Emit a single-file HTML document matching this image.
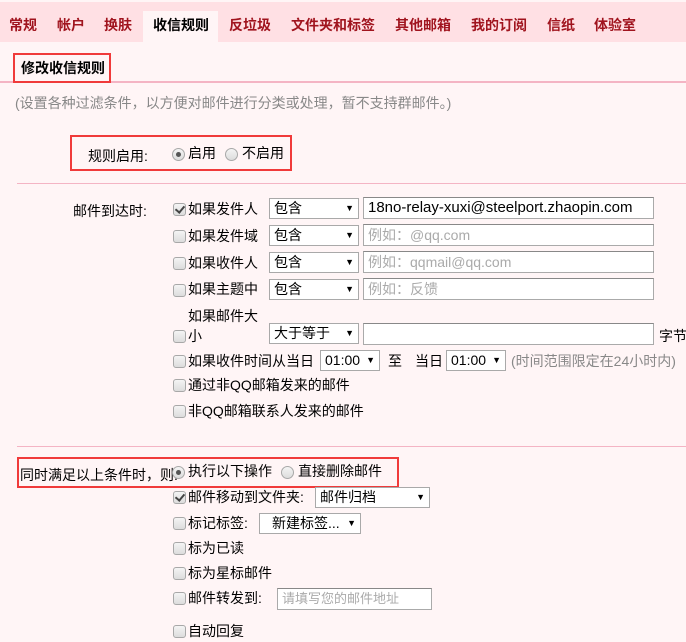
<!DOCTYPE html>
<html><head><meta charset="utf-8"><style>
*{margin:0;padding:0;box-sizing:border-box}
body{width:686px;height:642px;background:#fff5f6;position:relative;overflow:hidden;font-family:"Liberation Sans","Noto Sans CJK SC",sans-serif;font-size:14px;color:#000}
.a{position:absolute;white-space:nowrap;line-height:20px}
.tabbar{position:absolute;left:0;top:2px;width:686px;height:40px;background:#ffe0e4}
.tab{position:absolute;top:15px;color:#a0141e;font-size:14px;line-height:20px;font-weight:bold}
.cb{position:absolute;width:13px;height:13px;border:1px solid #a8a8a8;border-radius:3px;background:linear-gradient(#f4f4f4,#dcdcdc)}
.cb.on::after{content:"";position:absolute;left:3px;top:0px;width:4px;height:7px;border:solid #444;border-width:0 2px 2px 0;transform:rotate(40deg)}
.rd{position:absolute;width:13px;height:13px;border:1px solid #a8a8a8;border-radius:50%;background:linear-gradient(#f4f4f4,#dcdcdc)}
.rd.on::after{content:"";position:absolute;left:3px;top:3px;width:5px;height:5px;border-radius:50%;background:#555}
.sel{position:absolute;height:21px;border:1px solid #a9a9a9;background:#fff;line-height:19px;padding-left:4px;font-size:14px}
.sel::after{content:"▼";position:absolute;right:4px;top:0;font-size:9px}
.inp{position:absolute;height:22px;border:1px solid #aaa;border-top-color:#888;background:#fff;line-height:20px;padding-left:4px;font-size:14px;color:#aaa}
.red{position:absolute;border:2px solid #f03a3a}
.hl{position:absolute;height:1px;background:#f4b4c4}
</style></head><body>
<div class="tabbar"></div>
<div style="position:absolute;left:143px;top:11px;width:75px;height:31px;background:#fff5f6"></div>
<div class="tab" style="left:9px">常规</div>
<div class="tab" style="left:57px">帐户</div>
<div class="tab" style="left:104px">换肤</div>
<div class="tab" style="left:153px;color:#000">收信规则</div>
<div class="tab" style="left:229px">反垃圾</div>
<div class="tab" style="left:291px">文件夹和标签</div>
<div class="tab" style="left:395px">其他邮箱</div>
<div class="tab" style="left:471px">我的订阅</div>
<div class="tab" style="left:547px">信纸</div>
<div class="tab" style="left:594px">体验室</div>

<div class="hl" style="left:0;top:81px;width:686px;height:2px"></div>
<div class="a" style="left:21px;top:58px;font-weight:bold">修改收信规则</div>
<div class="red" style="left:13px;top:53px;width:98px;height:30px"></div>

<div class="a" style="left:15px;top:93px;color:#888;font-size:14px">(设置各种过滤条件，以方便对邮件进行分类或处理，暂不支持群邮件。)</div>

<div class="red" style="left:70px;top:135px;width:222px;height:36px"></div>
<div class="a" style="left:88px;top:146px">规则启用:</div>
<div class="rd on" style="left:172px;top:148px"></div>
<div class="a" style="left:188px;top:143px">启用</div>
<div class="rd" style="left:225px;top:148px"></div>
<div class="a" style="left:242px;top:143px">不启用</div>

<div class="hl" style="left:17px;top:183px;width:669px"></div>

<div class="a" style="left:73px;top:201px">邮件到达时:</div>

<div class="cb on" style="left:173px;top:203px"></div>
<div class="a" style="left:188px;top:199px">如果发件人</div>
<div class="sel" style="left:269px;top:198px;width:90px">包含</div>
<div class="inp" style="left:363px;top:197px;width:291px;color:#000;font-size:15px">18no-relay-xuxi@steelport.zhaopin.com</div>

<div class="cb" style="left:173px;top:230px"></div>
<div class="a" style="left:188px;top:226px">如果发件域</div>
<div class="sel" style="left:269px;top:225px;width:90px">包含</div>
<div class="inp" style="left:363px;top:224px;width:291px">例如：@qq.com</div>

<div class="cb" style="left:173px;top:257px"></div>
<div class="a" style="left:188px;top:253px">如果收件人</div>
<div class="sel" style="left:269px;top:252px;width:90px">包含</div>
<div class="inp" style="left:363px;top:251px;width:291px">例如：qqmail@qq.com</div>

<div class="cb" style="left:173px;top:284px"></div>
<div class="a" style="left:188px;top:279px">如果主题中</div>
<div class="sel" style="left:269px;top:279px;width:90px">包含</div>
<div class="inp" style="left:363px;top:278px;width:291px">例如：反馈</div>

<div class="a" style="left:188px;top:306px">如果邮件大</div>
<div class="cb" style="left:173px;top:330px"></div>
<div class="a" style="left:188px;top:326px">小</div>
<div class="sel" style="left:269px;top:323px;width:90px">大于等于</div>
<div class="inp" style="left:363px;top:323px;width:291px"></div>
<div class="a" style="left:659px;top:326px">字节</div>

<div class="cb" style="left:173px;top:355px"></div>
<div class="a" style="left:188px;top:351px">如果收件时间从当日</div>
<div class="sel" style="left:320px;top:350px;width:60px">01:00</div>
<div class="a" style="left:388px;top:351px">至</div>
<div class="a" style="left:415px;top:351px">当日</div>
<div class="sel" style="left:446px;top:350px;width:60px">01:00</div>
<div class="a" style="left:511px;top:351px;color:#888">(时间范围限定在24小时内)</div>

<div class="cb" style="left:173px;top:379px"></div>
<div class="a" style="left:188px;top:375px">通过非QQ邮箱发来的邮件</div>
<div class="cb" style="left:173px;top:405px"></div>
<div class="a" style="left:188px;top:401px">非QQ邮箱联系人发来的邮件</div>

<div class="hl" style="left:17px;top:446px;width:669px"></div>

<div class="red" style="left:17px;top:457px;width:382px;height:31px"></div>
<div class="a" style="left:20px;top:465px">同时满足以上条件时，则:</div>
<div class="rd on" style="left:172px;top:466px"></div>
<div class="a" style="left:188px;top:461px">执行以下操作</div>
<div class="rd" style="left:281px;top:466px"></div>
<div class="a" style="left:298px;top:461px">直接删除邮件</div>

<div class="cb on" style="left:173px;top:491px"></div>
<div class="a" style="left:188px;top:487px">邮件移动到文件夹:</div>
<div class="sel" style="left:315px;top:487px;width:115px">邮件归档</div>

<div class="cb" style="left:173px;top:517px"></div>
<div class="a" style="left:188px;top:513px">标记标签:</div>
<div class="sel" style="left:259px;top:513px;width:102px;padding-left:12px">新建标签...</div>

<div class="cb" style="left:173px;top:542px"></div>
<div class="a" style="left:188px;top:538px">标为已读</div>
<div class="cb" style="left:173px;top:567px"></div>
<div class="a" style="left:188px;top:563px">标为星标邮件</div>
<div class="cb" style="left:173px;top:592px"></div>
<div class="a" style="left:188px;top:588px">邮件转发到:</div>
<div class="inp" style="left:277px;top:588px;width:155px;height:22px;font-size:13px">请填写您的邮件地址</div>
<div class="cb" style="left:173px;top:625px"></div>
<div class="a" style="left:188px;top:621px">自动回复</div>
</body></html>
